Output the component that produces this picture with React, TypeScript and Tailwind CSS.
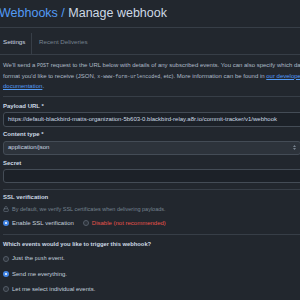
import { Lock } from "lucide-react";

function Radio({ checked, label, danger }: { checked?: boolean; label: React.ReactNode; danger?: boolean }) {
  return (
    <label className="flex items-center gap-[3px] h-[9px] text-[6px] leading-[9px]">
      {checked ? (
        <span className="w-[6px] h-[6px] rounded-full bg-[#4184e4] flex items-center justify-center">
          <span className="w-[2px] h-[2px] rounded-full bg-white" />
        </span>
      ) : (
        <span className="w-[6px] h-[6px] rounded-full border border-[#545d68] bg-[#2d333b]" />
      )}
      <span className={danger ? "text-[#e5534b]" : "text-[#c5d1de]"}>{label}</span>
    </label>
  );
}

export default function App() {
  return (
    <div
      className="w-[300px] h-[300px] overflow-hidden bg-[#22272e] text-[#adbac7] text-[6px] leading-[9px]"
      style={{ fontFamily: "'Liberation Sans', Arial, sans-serif" }}
    >
      <div className="w-[310px] flex flex-col">
        <h1 className="h-[28px] flex items-center text-[12.5px] ml-[-1px] text-[#cdd9e5] border-b border-[#373e47]">
          <span className="text-[#539bf5] whitespace-pre">Webhooks / </span>Manage webhook
        </h1>
        <div className="flex items-stretch h-[27px] border-b border-[#373e47] text-[6.2px]">
          <div className="flex items-center px-[3px] w-[31px] text-[#cdd9e5]">Settings</div>
          <div className="w-px bg-[#373e47] mt-[5px]" />
          <div className="flex items-center px-[7px] text-[#768390]">Recent Deliveries</div>
        </div>
        <div className="px-[3px] flex flex-col">
          <p className="pt-[6px] pb-[4px] leading-[9.5px] text-[#adbac7] border-b border-[#373e47]">
            We'll send a <code className="font-mono text-[5px]">POST</code> request to the URL below with details of any subscribed events. You can also specify which data format you'd like to receive (JSON, <code className="font-mono text-[5px]">x-www-form-urlencoded</code>, etc). More information can be found in <span className="text-[#539bf5] underline">our developer documentation</span>.
          </p>
          <div className="pt-[5px] font-bold text-[#cdd9e5]">Payload URL *</div>
          <div className="mt-[1px] h-[15px] flex items-center px-[4px] bg-[#1c2128] border border-[#444c56] rounded-[3px] text-[#cdd9e5] whitespace-nowrap">
            https://default-blackbird-matts-organization-5b603-0.blackbird-relay.a8r.io/commit-tracker/v1/webhook
          </div>
          <div className="mt-[3px] font-bold text-[#cdd9e5]">Content type *</div>
          <div className="mt-[2px] w-[298px] h-[14px] flex items-center justify-between px-[4px] bg-[#2d333b] border border-[#444c56] rounded-[3px] text-[#cdd9e5]">
            <span>application/json</span>
            <svg viewBox="0 0 8 12" className="w-[3px] h-[5px] text-[#909dab]" fill="currentColor">
              <path d="M4 0 L8 4 H0 Z M0 8 H8 L4 12 Z" />
            </svg>
          </div>
          <div className="mt-[4px] font-bold text-[#cdd9e5]">Secret</div>
          <div className="mt-[1px] h-[14px] bg-[#1c2128] border border-[#444c56] rounded-[3px]" />
          <div className="mt-[6px] border-t border-[#373e47] pt-[3px] font-bold text-[#cdd9e5]">SSL verification</div>
          <div className="mt-[3px] h-[9px] flex items-center gap-[3px] text-[5.5px] text-[#768390]">
            <Lock className="w-[6px] h-[6px]" strokeWidth={2} />
            <span>By default, we verify SSL certificates when delivering payloads.</span>
          </div>
          <div className="mt-[5px] flex items-center gap-[9px] pb-[6px] border-b border-[#373e47]">
            <Radio checked label="Enable SSL verification" />
            <Radio danger label="Disable (not recommended)" />
          </div>
          <div className="pt-[5px] flex flex-col gap-[6px]">
            <div className="text-[5.8px] font-bold text-[#cdd9e5]">Which events would you like to trigger this webhook?</div>
            <Radio
              label={
                <>
                  Just the <code className="font-mono text-[5px]">push</code> event.
                </>
              }
            />
            <Radio checked label="Send me everything." />
            <Radio label="Let me select individual events." />
          </div>
        </div>
      </div>
    </div>
  );
}
